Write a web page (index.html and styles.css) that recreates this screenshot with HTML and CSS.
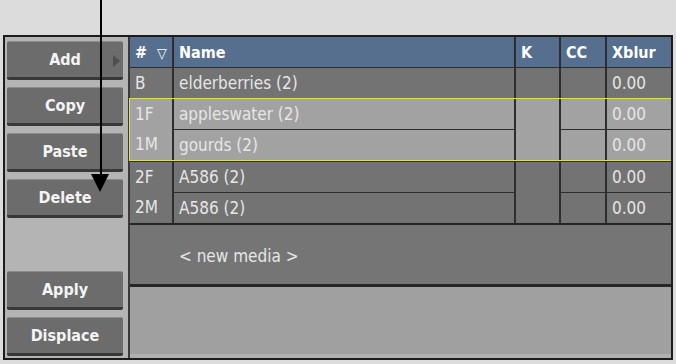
FILE: index.html
```html
<!DOCTYPE html>
<html lang="en">
<head>
  <meta charset="UTF-8">
  <title>Media List</title>
  <link rel="stylesheet" href="styles.css">
</head>
<body>

  <!-- callout arrow -->
  <div class="callout">
    <div class="callout-line"></div>
    <div class="callout-head"></div>
  </div>

  <div class="top-space"></div>

  <section class="panel">
    <!-- left buttons -->
    <div class="side">
      <button class="btn btn-add">Add<span class="btn-arrow"></span></button>
      <button class="btn">Copy</button>
      <button class="btn">Paste</button>
      <button class="btn">Delete</button>
      <button class="btn btn-push">Apply</button>
      <button class="btn">Displace</button>
    </div>

    <!-- media list -->
    <div class="list">
      <div class="grid head">
        <div class="cell">#<span class="sort">&#9661;</span></div>
        <div class="cell">Name</div>
        <div class="cell">K</div>
        <div class="cell">CC</div>
        <div class="cell">Xblur</div>
      </div>

      <div class="grid group">
        <div class="cell">B</div>
        <div class="cell">elderberries (2)</div>
        <div class="cell"></div>
        <div class="cell"></div>
        <div class="cell">0.00</div>
      </div>

      <div class="grid group pair selected">
        <div class="cell num">1F</div>
        <div class="cell">appleswater (2)</div>
        <div class="cell k"></div>
        <div class="cell"></div>
        <div class="cell">0.00</div>
        <div class="cell num">1M</div>
        <div class="cell">gourds (2)</div>
        <div class="cell"></div>
        <div class="cell">0.00</div>
      </div>

      <div class="grid group pair">
        <div class="cell num">2F</div>
        <div class="cell">A586 (2)</div>
        <div class="cell k"></div>
        <div class="cell"></div>
        <div class="cell">0.00</div>
        <div class="cell num">2M</div>
        <div class="cell">A586 (2)</div>
        <div class="cell"></div>
        <div class="cell">0.00</div>
      </div>

      <div class="new-media">&lt; new media &gt;</div>
      <div class="empty"></div>
    </div>
  </section>

</body>
</html>
```

FILE: styles.css
```css
body {
  margin: 0;
  background: #dcdcdc;
  font-family: "DejaVu Sans Condensed", "DejaVu Sans", sans-serif;
  width: 676px;
  height: 364px;
  overflow: hidden;
  position: relative;
}

.top-space {
  height: 35px;
}

.panel {
  margin: 0 3px;
  height: 321px;
  border: 2px solid #1c1c1c;
  background: #b4b4b4;
  display: grid;
  grid-template-columns: 123px 1fr;
}

/* left buttons */
.side {
  display: flex;
  flex-direction: column;
  gap: 7px;
  padding: 4px 5px 2px 2px;
}

.btn {
  position: relative;
  height: 39px;
  background: #6c6c6c;
  border: none;
  border-top: 1px solid #8a8a8a;
  border-bottom: 3px solid #383838;
  border-radius: 2px;
  color: #f4f4f4;
  font-family: inherit;
  font-size: 16px;
  font-weight: bold;
  padding: 0;
}

.btn-push {
  margin-top: auto;
}

.btn-arrow {
  position: absolute;
  right: 3px;
  top: 13px;
  border-left: 7px solid #4e4e4e;
  border-top: 6px solid transparent;
  border-bottom: 6px solid transparent;
}

/* list */
.list {
  display: flex;
  flex-direction: column;
  background: #a0a0a0;
  border-left: 2px solid #3a3a3a;
}

.grid {
  display: grid;
  grid-template-columns: 42px 340px 43px 44px 1fr;
  column-gap: 2px;
  row-gap: 1px;
  background: #2e2e2e;
}

.cell {
  height: 30px;
  line-height: 31px;
  padding-left: 5px;
  color: #e6e6e6;
  font-size: 17px;
  background: #737373;
  white-space: nowrap;
}

.head .cell {
  background: #566f8e;
  color: #fff;
  font-weight: bold;
  font-size: 16px;
  height: 30px;
}

.sort {
  font-weight: normal;
  font-size: 14px;
  margin-left: 10px;
}

.group {
  border-top: 1px solid #2e2e2e;
}

.pair .num {
  grid-column: 1;
}

.pair .num + .cell {
  grid-column: 2;
}

.pair .k {
  grid-column: 3;
  grid-row: 1 / span 2;
  height: auto;
}

.pair .cell:nth-child(6) {
  margin-top: -1px;
  height: 31px;
}

.selected {
  border-top: 1px solid #e2dc5c;
  border-bottom: 1px solid #e2dc5c;
  border-left: 1px solid #e2dc5c;
  margin-left: -1px;
}

.selected .cell {
  background: #a2a2a2;
}

.new-media {
  height: 59px;
  line-height: 62px;
  padding-left: 49px;
  color: #e6e6e6;
  font-size: 17px;
  background: #757575;
  border-top: 2px solid #262626;
  border-bottom: 3px solid #262626;
}

.empty {
  flex: 1;
  border-bottom: 4px solid #b0b0b0;
}

/* callout arrow over everything */
.callout {
  position: absolute;
  left: 91px;
  top: 0;
  width: 19px;
  z-index: 2;
}

.callout-line {
  width: 2px;
  height: 174px;
  margin-left: 9px;
  background: #000;
}

.callout-head {
  width: 0;
  border-left: 9px solid transparent;
  border-right: 9px solid transparent;
  border-top: 18px solid #000;
}
```
